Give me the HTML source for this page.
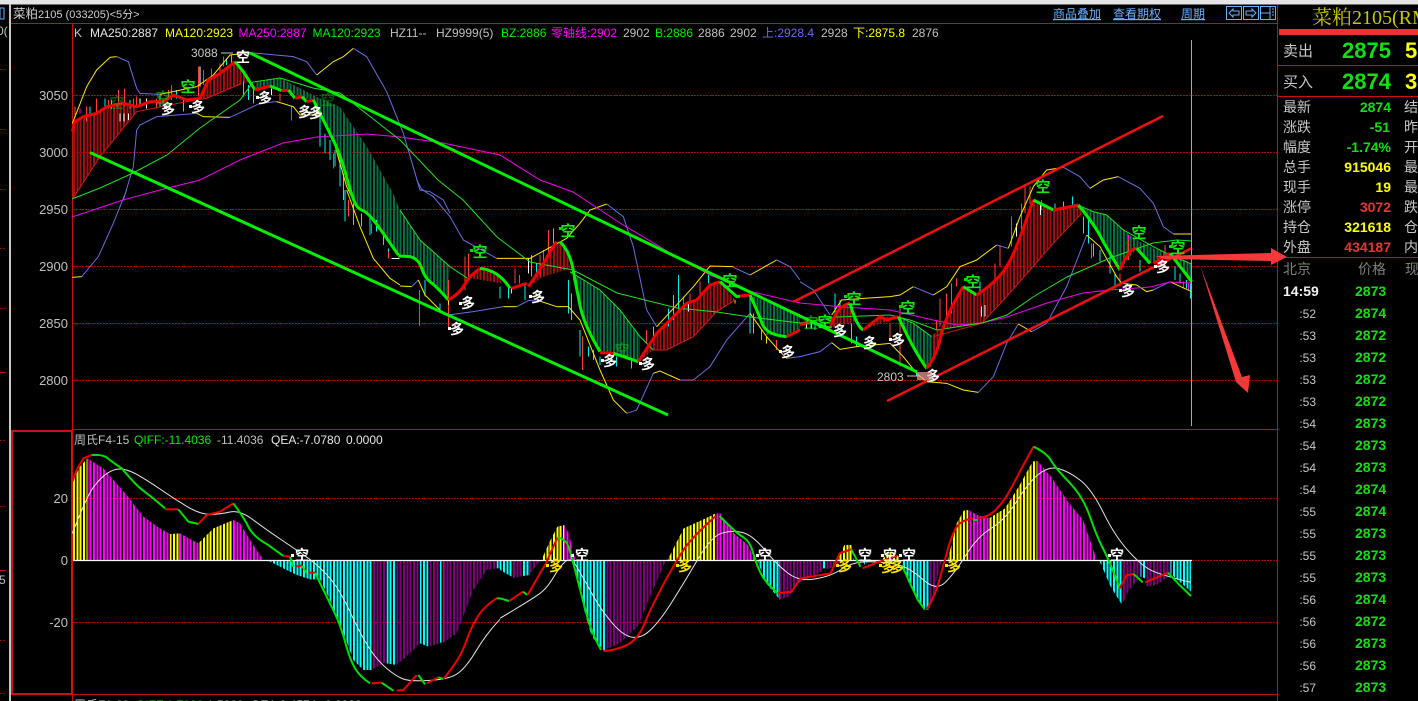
<!DOCTYPE html>
<html><head><meta charset="utf-8"><style>
html,body{margin:0;padding:0;background:#000;overflow:hidden;width:1418px;height:701px}
svg{display:block;position:absolute;left:0;top:0}
text{font-family:"Liberation Sans","Noto Sans CJK SC",sans-serif;font-size:12px;white-space:pre}
.s,.s *{vector-effect:non-scaling-stroke}
.t{fill:none;stroke-width:1}
.p{stroke:#6c6ce0}.y{stroke:#ffe800}.gn{stroke:#20e020}.m{stroke:#f000f0}.w{stroke:#e8e8e8}
.r3{fill:none;stroke:#f00000;stroke-width:3;stroke-linejoin:round}
.g3{fill:none;stroke:#00f000;stroke-width:3;stroke-linejoin:round}
.r2{fill:none;stroke:#f00000;stroke-width:2;stroke-linejoin:round}
.g2{fill:none;stroke:#00e000;stroke-width:2;stroke-linejoin:round}
.ax{font-size:13px;fill:#c0c0c0;text-anchor:end}
.lb{font-size:14px;fill:#c8c8c8}
.v{font-size:14px;font-weight:bold;text-anchor:end}
.tm{font-size:12px;fill:#c8c8c8;text-anchor:end}
.pr{font-size:14px;font-weight:bold;fill:#10e010}
.d{font-size:14px;fill:#fff;font-weight:bold;text-anchor:middle}
.dy{font-size:14px;fill:#ffe800;font-weight:bold;text-anchor:middle}
.k{font-size:15px;fill:#10e810;font-weight:bold;text-anchor:middle}
.kw{font-size:14px;fill:#fff;font-weight:bold;text-anchor:middle}
.lnk{font-size:12px;fill:#68b0ff;text-decoration:underline}
.bar{stroke-dasharray:2 1.3333;shape-rendering:crispEdges;fill:none}
</style></head><body>
<svg width="1418" height="701" viewBox="0 0 1418 701" xmlns="http://www.w3.org/2000/svg">
<defs>
<clipPath id="cdr">
<polygon transform="scale(.33333)" points="217,395 225,365 250,350 290,340 320,320 370,310 410,320 410,335 300,470 217,598"/>
<polygon transform="scale(.33333)" points="600,295 625,240 660,220 705,185 730,215 745,245 620,295"/>
<polygon transform="translate(400 180) scale(.33333)" points="210,285 240,265 295,285 305,310 215,295"/>
<polygon transform="translate(400 180) scale(.33333)" points="385,320 420,270 470,185 495,195 512,265 430,290"/>
<polygon transform="translate(400 180) scale(.33333)" points="715,545 770,460 820,410 860,370 890,360 930,315 960,305 1005,360 950,395 880,470 800,510 760,510"/>
<polygon transform="translate(800 160) scale(.33333)" points="90,505 110,450 150,430 165,485"/>
<polygon transform="translate(800 160) scale(.33333)" points="185,510 240,470 295,470 245,490"/>
<polygon transform="translate(800 160) scale(.33333)" points="380,625 410,580 440,460 490,380 530,405 590,365 640,290 700,120 760,150 835,135 845,160 760,250 690,330 620,410 545,490 410,510 395,530"/>
</clipPath>
<clipPath id="cdg">
<polygon points="255,82 280,78 317,97 340,107 367,147 393,193 400,210 420,240 450,267 448,300 437,287 425,278 418,258 400,256 380,228 367,212 357,208 350,190 340,153 325,123 313,100 300,97 288,90 270,86 255,90"/>
<polygon transform="translate(400 180) scale(.33333)" points="510,275 600,330 660,390 720,470 720,545 640,520 600,515 555,440 530,330"/>
<polygon transform="translate(400 180) scale(.33333)" points="1050,345 1200,405 1200,450 1160,470 1100,465 1075,400"/>
<polygon transform="translate(800 160) scale(.33333)" points="295,470 340,490 395,530 395,620 380,625 340,570"/>
<polygon transform="translate(800 160) scale(.33333)" points="835,135 880,155 920,165 970,210 1010,240 1060,265 1110,280 1175,310 1175,365 1110,280 1050,310 1010,265 960,330 920,265 880,190"/>
</clipPath>
<clipPath id="cy">
<polygon transform="translate(0 420) scale(.33333)" points="217,420 217,185 240,140 262,115 262,420"/>
<polygon transform="translate(0 420) scale(.33333)" points="510,342 540,340 540,420 510,420"/>
<polygon transform="translate(0 420) scale(.33333)" points="595,420 595,370 640,325 700,300 700,420"/>
<polygon transform="translate(500 420) scale(.4591 .33333)" points="90,420 110,360 125,320 140,315 140,420"/>
<polygon transform="translate(500 420) scale(.4591 .33333)" points="365,420 400,325 440,300 470,280 470,420"/>
<polygon transform="translate(500 420) scale(.4591 .33333)" points="735,420 750,375 765,375 770,420"/>
<polygon transform="translate(500 420) scale(.4591 .33333)" points="830,420 850,395 870,410 870,420"/>
<polygon transform="translate(500 420) scale(.4591 .33333)" points="975,420 995,310 1010,272 1020,270 1020,420"/>
<polygon transform="translate(500 420) scale(.4591 .33333)" points="1065,420 1065,295 1100,265 1130,200 1160,125 1170,122 1170,420"/>
</clipPath>
<clipPath id="cm">
<polygon transform="translate(0 420) scale(.33333)" points="262,420 262,115 310,145 345,185 380,225 430,290 480,325 510,342 510,420"/>
<polygon transform="translate(0 420) scale(.33333)" points="540,420 540,340 595,370 595,420"/>
<polygon transform="translate(0 420) scale(.33333)" points="700,420 700,300 720,310 750,360 790,420"/>
<polygon transform="translate(500 420) scale(.4591 .33333)" points="140,420 140,315 150,340 160,400 165,420"/>
<polygon transform="translate(500 420) scale(.4591 .33333)" points="470,420 470,280 480,280 510,340 540,375 555,420"/>
<polygon transform="translate(500 420) scale(.4591 .33333)" points="1020,420 1020,270 1040,285 1065,295 1065,420"/>
<polygon transform="translate(500 420) scale(.4591 .33333)" points="1170,420 1170,122 1200,170 1240,250 1270,300 1300,420"/>
</clipPath>
<clipPath id="cc">
<polygon transform="translate(0 420) scale(.33333)" points="800,420 850,445 890,465 930,478 960,478 985,530 1020,610 1060,720 1090,750 1115,750 1115,420"/>
<polygon transform="translate(0 420) scale(.33333)" points="1160,420 1160,730 1190,735 1190,420"/>
<polygon transform="translate(0 420) scale(.33333)" points="1260,420 1260,670 1285,680 1285,420"/>
<polygon transform="translate(0 420) scale(.33333)" points="1320,420 1320,668 1330,668 1330,420"/>
<polygon transform="translate(0 420) scale(.33333)" points="1490,420 1490,445 1500,445 1500,420"/>
<polygon transform="translate(500 420) scale(.4591 .33333)" points="0,420 0,450 25,470 25,420"/>
<polygon transform="translate(500 420) scale(.4591 .33333)" points="50,420 50,468 65,465 65,420"/>
<polygon transform="translate(500 420) scale(.4591 .33333)" points="160,420 185,580 200,650 225,690 230,690 230,420"/>
<polygon transform="translate(500 420) scale(.4591 .33333)" points="560,420 580,490 610,540 610,420"/>
<polygon transform="translate(500 420) scale(.4591 .33333)" points="703,420 703,445 710,445 710,420"/>
<polygon transform="translate(500 420) scale(.4591 .33333)" points="788,420 795,435 805,420"/>
<polygon transform="translate(500 420) scale(.4591 .33333)" points="875,420 890,490 925,570 935,570 935,420"/>
<polygon transform="translate(500 420) scale(.4591 .33333)" points="1305,420 1330,500 1355,555 1355,420"/>
<polygon transform="translate(500 420) scale(.4591 .33333)" points="1395,420 1395,470 1405,475 1405,420"/>
<polygon transform="translate(500 420) scale(.4591 .33333)" points="1460,420 1460,460 1505,515 1505,420"/>
</clipPath>
<clipPath id="cp">
<polygon transform="translate(0 420) scale(.33333)" points="1115,420 1115,750 1160,725 1160,420"/>
<polygon transform="translate(0 420) scale(.33333)" points="1190,420 1190,735 1230,700 1260,670 1260,420"/>
<polygon transform="translate(0 420) scale(.33333)" points="1285,420 1285,680 1320,670 1320,420"/>
<polygon transform="translate(0 420) scale(.33333)" points="1330,420 1330,668 1370,640 1420,510 1460,450 1490,445 1490,420"/>
<polygon transform="translate(500 420) scale(.4591 .33333)" points="25,420 25,475 50,468 50,420"/>
<polygon transform="translate(500 420) scale(.4591 .33333)" points="65,420 65,460 90,420"/>
<polygon transform="translate(500 420) scale(.4591 .33333)" points="230,420 230,688 260,670 300,620 330,520 360,425 360,420"/>
<polygon transform="translate(500 420) scale(.4591 .33333)" points="610,420 610,538 630,530 650,490 700,455 703,450 703,420"/>
<polygon transform="translate(500 420) scale(.4591 .33333)" points="710,420 710,448 730,440 745,422 745,420"/>
<polygon transform="translate(500 420) scale(.4591 .33333)" points="770,420 785,435 790,420"/>
<polygon transform="translate(500 420) scale(.4591 .33333)" points="935,420 935,570 945,520 960,430 965,420"/>
<polygon transform="translate(500 420) scale(.4591 .33333)" points="1355,420 1355,555 1370,510 1395,470 1395,420"/>
<polygon transform="translate(500 420) scale(.4591 .33333)" points="1405,420 1405,500 1430,495 1460,465 1460,420"/>
</clipPath>
</defs>
<rect width="1418" height="701" fill="#000"/>
<rect width="1418" height="4.5" fill="#e4e4e4"/>
<rect x="9" y="4" width="2" height="697" fill="#c8c8c8"/>
<rect x="0" y="8" width="4" height="11" fill="none" stroke="#68b0ff"/>
<text x="-3" y="35" fill="#c0c0c0">0(</text>
<path d="M0 69.5H6M0 129.5H6M0 189.5H6M0 248.5H6M0 308.5H6M0 440.5H6M0 506.5H6M0 640.5H6M0 693.5H6" stroke="#a00000" stroke-dasharray="2 1"/>
<path d="M0 372.5H6M0 570.5H6" stroke="#c01010"/>
<text x="-1" y="584" fill="#c0c0c0" font-size="10">5</text>

<!-- grid -->
<path d="M73 95.5H1278M73 152.5H1278M73 209.5H1278M73 266.5H1278M73 323.5H1278M73 380.5H1278M73 498.5H1278M73 622.5H1278M1192 560.5H1278" stroke="#b00000" stroke-dasharray="2 1"/>
<!-- frames -->
<path d="M11 23.5H1278M73 429.5H1278M73 694.5H1278" stroke="#c81010" stroke-width="1"/>
<path d="M72.5 23V701" stroke="#c81010"/>
<rect x="12" y="431" width="60" height="263" fill="none" stroke="#d01010" stroke-width="2"/>
<path d="M1277.5 5V701" stroke="#c81010"/>

<!-- clouds as bars -->
<line class="bar" x1="73" x2="1192" y1="225" y2="225" stroke="#a01010" stroke-width="360" clip-path="url(#cdr)"/>
<line class="bar" x1="73" x2="1192" y1="225" y2="225" stroke="#087048" stroke-width="360" clip-path="url(#cdg)"/>

<g class="s">
<!-- candles -->
<g fill="none" stroke-width="1" shape-rendering="crispEdges">
<g transform="scale(.33333)">
<path stroke="#ff4030" d="M225 320V350M260 320V365M290 295V345M325 300V325M355 270V320M373 265V320M400 295V325M410 290V320M470 295V325M505 270V300M515 255V300M595 200V290M610 210V255M635 205V240M660 190V225M670 170V200M875 320V362M840 280V305M1000 460V505"/>
<path stroke="#00f0f0" d="M270 320V345M315 295V320M335 300V325M390 300V325M480 285V320M550 295V335M530 270V295M680 175V195M695 165V190M730 245V290M745 255V300M760 270V310M960 340V440M975 400V460M990 420V480M1005 450V500M1020 470V560M1030 520V600"/>
<path stroke="#fff" d="M600 200V260M360 340V365M372 340V365M385 340V360M440 295V325M420 295V320M815 265V285"/>
<path stroke="#f0f" d="M240 325V340M950 325V350"/>
</g>
<g transform="translate(0 190) scale(.33333)">
<path stroke="#00f0f0" d="M1035 0V95M1060 40V105M1085 70V110M1110 80V135M1130 90V125M1150 130V165M1165 175V205"/>
<path stroke="#ff4030" d="M1045 30V80M1115 100V130M1165 185V205"/>
<path stroke="#fff" d="M1175 205H1198"/>
</g>
<g transform="translate(400 180) scale(.33333)">
<path stroke="#ff4030" d="M58 330V438M145 300V450M195 230V330M205 220V290M345 265V310M358 285V310M430 210V260M445 150V220M548 470V570M740 450V490M900 305V350M870 340V370M850 350V390M1130 480V510M420 225V290"/>
<path stroke="#00f0f0" d="M75 300V350M120 370V395M300 320V355M325 320V355M375 315V360M395 225V290M410 250V290M460 145V190M505 300V400M515 340V420M540 450V530M565 500V530M580 510V540M600 530V555M650 530V560M695 540V565M820 345V420M835 285V390M925 285V310M805 385V440M1050 350V460M1060 400V460M1085 450V480M1100 470V490M760 440V480"/>
<path stroke="#ffe800" d="M145 360V375M335 325V340M1100 470V490M1005 360V370"/>
<path stroke="#fff" d="M385 235V280M865 370V395"/>
</g>
<g transform="translate(800 160) scale(.33333)">
<path stroke="#ff4030" d="M300 440V620M270 490V540M420 415V500M440 400V470M455 370V460M470 355V380M585 310V370M600 255V320M635 170V260M665 130V210M675 80V160M690 80V130M725 120V150M960 340V380M985 240V300M875 250V295M1095 255V290M410 480V510"/>
<path stroke="#00f0f0" d="M105 400V470M120 420V450M155 490V550M170 530V560M350 630V650M540 365V400M765 130V155M790 125V150M818 110V135M850 170V220M865 175V250M880 250V290M900 270V305M930 290V340M945 340V385M1020 300V335M1125 320V360M1140 340V370M1160 360V385M1172 370V415M45 490V510"/>
<path stroke="#fff" d="M722 130V165M650 190V230M545 440V470M555 435V470M20 490V505M35 490V505"/>
<path stroke="#f0f" d="M1150 365V385M1165 370V390M985 225V240"/>
</g>
</g>

<!-- thin curves -->
<g transform="scale(.33333)">
<polyline class="t y" points="217,370 225,350 260,260 290,210 330,172 350,170"/>
<polyline class="t p" points="350,170 385,185 410,265 420,280 480,283"/>
<polyline class="t y" points="480,283 590,260 640,225 690,165 750,158"/>
<polyline class="t p" points="750,158 880,170 920,185 950,225"/>
<polyline class="t y" points="950,225 1000,185 1030,170 1060,145"/>
<polyline class="t p" points="1060,145 1100,170 1160,275 1210,400 1260,570 1290,575 1330,600 1350,640"/>
<polyline class="t p" points="370,600 400,500 410,390 420,375 470,350 590,340"/>
<polyline class="t y" points="590,340 610,350 690,352"/>
<polyline class="t p" points="690,352 780,310 830,305"/>
<polyline class="t y" points="830,305 880,320 900,345 960,345 1000,420 1040,560 1060,600"/>
<polyline class="t" style="stroke:#d01818" points="217,598 300,470 410,335 560,305 620,295 725,250"/>
</g>
<g transform="translate(0 190) scale(.33333)">
<polyline class="t y" points="217,262 245,260"/>
<polyline class="t p" points="245,260 295,200 340,100 380,0"/>
<polyline class="t y" points="1040,0 1080,110 1120,205 1170,265 1200,285"/>
</g>
<g transform="translate(400 180) scale(.33333)">
<polyline class="t p" points="50,0 65,28 100,50 150,110 190,180 290,235"/>
<polyline class="t y" points="290,235 390,235 500,175 540,130 570,90 620,72"/>
<polyline class="t p" points="620,72 670,110 700,200 740,390 770,440"/>
<polyline class="t y" points="770,440 880,320 930,258 1000,260"/>
<polyline class="t p" points="1000,262 1050,285"/>
<polyline class="t y" points="1050,285 1130,240"/>
<polyline class="t p" points="1130,240 1170,260 1200,300"/>
<polyline class="t y" points="0,318 35,320"/>
<polyline class="t p" points="35,320 55,300"/>
<polyline class="t y" points="55,300 75,345 120,390 145,405"/>
<polyline class="t p" points="145,405 220,395 310,380"/>
<polyline class="t y" points="310,380 350,380"/>
<polyline class="t p" points="350,380 385,362 410,360"/>
<polyline class="t y" points="410,360 470,380 505,380 540,420 600,570 640,660 680,700"/>
<polyline class="t p" points="680,700 710,690 760,580"/>
<polyline class="t y" points="760,580 780,573 840,600"/>
<polyline class="t p" points="840,600 880,600 930,560 980,480 1050,400"/>
<polyline class="t y" points="1050,400 1100,470 1140,515 1160,535"/>
<polyline class="t p" points="1160,535 1200,530"/>
<polyline class="t gn" points="0,90 60,180 150,260 210,300"/>
<polyline class="t gn" points="510,275 600,330 660,390 720,470 760,510"/>
<polyline style="stroke:#d01818" class="t" points="760,510 800,510 880,470 950,395 1005,360"/>
</g>
<g transform="translate(800 160) scale(.33333)">
<polyline class="t p" points="0,365 40,390 90,465"/>
<polyline class="t y" points="95,465 125,420 190,415 270,410 300,405 340,380"/>
<polyline class="t p" points="340,380 400,405"/>
<polyline class="t y" points="400,405 440,380 480,320 530,300 590,255"/>
<polyline class="t p" points="590,255 625,265"/>
<polyline class="t y" points="625,265 660,170 700,80 740,30 790,22"/>
<polyline class="t p" points="790,22 840,50 870,85"/>
<polyline class="t y" points="870,85 910,60 955,50"/>
<polyline class="t p" points="955,50 1020,85 1060,130 1090,200 1120,222"/>
<polyline class="t y" points="1120,222 1175,222"/>
<polyline class="t p" points="0,590 60,575 95,548"/>
<polyline class="t y" points="95,548 120,568 170,560 270,550 310,590 350,640 380,665 440,670 490,690 535,697"/>
<polyline class="t p" points="535,697 580,650 620,550 655,492"/>
<polyline class="t y" points="655,492 695,515"/>
<polyline class="t p" points="695,515 740,490 800,380 860,225"/>
<polyline class="t y" points="860,225 900,260 950,350 965,370 1010,375 1040,395 1060,390"/>
<polyline class="t p" points="1060,390 1110,365"/>
<polyline class="t y" points="1110,365 1175,395"/>
<polyline class="t gn" points="845,140 880,155 920,165 970,210 1060,260 1120,290 1175,312"/>
<polyline class="t gn" points="295,470 340,490 395,530"/>
<polyline style="stroke:#d01818" class="t" points="400,530 545,490 620,410 690,330 760,250 845,160"/>
</g>
<polyline class="t m" points="72,217 123,200 160,190 200,180 240,160 283,143 317,137 367,134 400,137 443,143 500,155 540,180 573,192 620,223 677,257 710,275 753,292 800,303 843,307 890,310 933,320 957,325 982,323 1007,317 1047,303 1083,293 1110,290 1150,287 1170,282 1192,283"/>
<polyline class="t gn" points="72,199 100,188 133,173 167,155 200,128 240,100 253,82 280,78 313,88 340,93 400,140 438,180 463,200 497,237 530,262 573,270 617,293 677,308 717,312 750,317 800,323 837,317 890,315 910,320 937,330 982,323 1007,315 1033,297 1067,277 1110,258 1133,250 1153,243 1177,240 1192,241"/>

<!-- channel lines -->
<line x1="250" y1="53" x2="917" y2="372" stroke="#00f000" stroke-width="3"/>
<line x1="90" y1="152.5" x2="668" y2="415" stroke="#00f000" stroke-width="3"/>
<line x1="793" y1="302" x2="1163" y2="116" stroke="#f01010" stroke-width="2.5"/>
<line x1="887" y1="401" x2="1192" y2="248" stroke="#f01010" stroke-width="2.5"/>

<!-- thick trend line -->
<g transform="scale(.33333)">
<polyline class="r3" points="217,395 225,365 250,350 290,340 320,320 370,310 410,320 450,305 490,305 520,285 560,300 600,295 625,240 660,220 705,185"/>
<polyline class="g3" points="705,185 730,215 765,270"/>
<polyline class="r3" points="765,270 810,258"/>
<polyline class="g3" points="810,258 845,272"/>
<polyline class="r3" points="845,272 865,270"/>
<polyline class="g3" points="865,270 885,295"/>
<polyline class="r3" points="885,295 905,290"/>
<polyline class="g3" points="905,290 920,305"/>
<polyline class="r3" points="920,305 940,300"/>
<path class="g3" d="M940 300Q975 370 997 415Q1020 460 1035 515Q1050 570 1060 597Q1070 625 1085 630Q1100 635 1120 660Q1140 685 1195 765"/>
</g>
<g transform="translate(400 180) scale(.33333)">
<path class="g3" d="M-5 228L30 230Q55 235 65 265Q75 295 92 307Q110 320 145 360"/>
<path class="r3" d="M145 360Q180 340 195 312Q210 285 240 265"/>
<path class="g3" d="M240 265Q295 270 330 325"/>
<polyline class="r3" points="335,325 380,310"/>
<path class="r3" d="M385 320Q420 270 445 225Q458 200 470 185"/>
<path class="g3" d="M480 185Q510 215 520 272Q530 330 542 385Q555 440 600 515"/>
<polyline class="r3" points="600,518 640,520"/>
<polyline class="g3" points="640,520 715,545"/>
<polyline class="r3" points="715,545 770,460 820,410 860,370 890,360 930,315 960,305"/>
<polyline class="g3" points="960,305 1010,350 1020,348"/>
<polyline class="r3" points="1020,348 1050,345"/>
<path class="g3" d="M1050 345Q1075 400 1087 432Q1100 465 1160 470"/>
<polyline class="r3" points="1160,470 1200,450"/>
</g>
<g transform="translate(800 160) scale(.33333)">
<polyline class="r3" points="0,495 30,485"/>
<polyline class="g3" points="30,485 90,505"/>
<path class="r3" d="M90 505Q110 435 150 430"/>
<path class="g3" d="M150 430Q170 500 190 510"/>
<polyline class="r3" points="190,510 240,470 260,480 295,470"/>
<path class="g3" d="M295 470Q340 570 380 625"/>
<path class="r3" d="M380 625Q410 590 425 520Q440 460 490 380"/>
<polyline class="g3" points="490,380 530,405"/>
<path class="r3" d="M530 405Q590 365 615 327Q640 290 670 205Q685 160 700 120"/>
<polyline class="g3" points="700,120 760,150"/>
<polyline class="r3" points="760,150 835,135"/>
<path class="g3" d="M835 135Q880 190 900 227Q920 265 960 330"/>
<path class="r3" d="M960 330Q985 265 1010 265"/>
<polyline class="g3" points="1010,265 1050,310"/>
<polyline class="r3" points="1060,310 1110,280"/>
<polyline class="g3" points="1110,280 1175,365"/>
</g>
</g>

<!-- lower panel bars -->
<line class="bar" x1="73" x2="1192" y1="562" y2="562" stroke="#ffff00" stroke-width="264" clip-path="url(#cy)"/>
<line class="bar" x1="73" x2="1192" y1="562" y2="562" stroke="#ff00ff" stroke-width="264" clip-path="url(#cm)"/>
<line class="bar" x1="73" x2="1192" y1="562" y2="562" stroke="#00ffff" stroke-width="264" clip-path="url(#cc)"/>
<line class="bar" x1="73" x2="1192" y1="562" y2="562" stroke="#800080" stroke-width="264" clip-path="url(#cp)"/>
<line x1="73" y1="560.5" x2="1192" y2="560.5" stroke="#fff" stroke-width="1.2"/>

<g class="s">
<!-- lower panel lines -->
<g transform="translate(0 420) scale(.33333)">
<path class="t w" d="M217 340Q260 230 280 202Q300 175 320 161Q340 147 360 147Q380 147 410 163Q440 180 480 207Q520 235 560 259Q600 283 630 283Q660 283 690 276Q720 270 760 300Q800 330 845 360Q890 390 925 415Q960 440 990 475Q1020 510 1050 575Q1080 640 1105 680Q1130 720 1160 745Q1190 770 1210 777Q1230 785 1290 781Q1350 778 1375 759Q1400 740 1430 690Q1460 640 1500 598"/>
<polyline class="r2" points="217,185 230,150 250,115 275,105"/>
<path class="g2" d="M275 105Q310 103 322 114Q335 125 365 145Q395 180 407 192Q420 205 440 220Q460 235 495 265"/>
<polyline class="r2" points="495,268 535,268"/>
<polyline class="g2" points="535,268 565,305 595,312"/>
<polyline class="r2" points="595,312 620,285 660,275 700,250"/>
<path class="g2" d="M700 250Q730 290 745 320Q760 350 800 372L850 408"/>
<polyline class="r2" points="850,408 870,410"/>
<polyline class="g2" points="870,410 880,440"/>
<polyline class="r2" points="885,440 905,437"/>
<polyline class="g2" points="905,437 920,458"/>
<polyline class="r2" points="925,458 945,458"/>
<path class="g2" d="M945 458Q985 540 1002 575Q1020 610 1035 665Q1050 720 1065 745Q1080 770 1110 790"/>
<polyline class="r2" points="1115,790 1145,788"/>
<polyline class="g2" points="1145,788 1180,812"/>
<polyline class="r2" points="1190,812 1210,810 1250,765"/>
<polyline class="g2" points="1255,765 1275,793"/>
<polyline class="r2" points="1280,790 1315,772"/>
<polyline class="g2" points="1315,772 1330,777"/>
<path class="r2" d="M1330 777Q1360 740 1375 715Q1390 690 1400 660Q1410 630 1430 595Q1450 560 1490 535"/>
<polyline class="g2" points="1490,535 1500,535"/>
</g>
<g transform="translate(500 420) scale(.4591 .33333)">
<path class="t w" d="M0 595L30 570Q60 545 80 527Q100 510 115 475Q130 440 142 425Q155 410 167 440Q180 470 200 520Q220 570 245 610Q270 650 290 652Q310 655 330 627Q350 600 375 545Q400 490 430 420Q460 350 482 340Q505 330 527 337Q550 345 575 387Q600 430 625 457Q650 485 685 477Q720 470 745 447Q770 425 800 425Q830 425 860 432Q890 440 920 477Q950 515 970 487Q990 460 1015 405Q1040 350 1070 325Q1100 300 1125 245Q1150 190 1172 164Q1195 138 1217 146Q1240 155 1265 182Q1290 210 1315 280Q1340 350 1370 395Q1400 440 1420 452Q1440 465 1505 487"/>
<polyline class="g2" points="0,535 20,543"/>
<polyline class="r2" points="20,543 50,515"/>
<polyline class="g2" points="50,515 60,525"/>
<polyline class="r2" points="60,525 100,430 125,353"/>
<path class="g2" d="M125 353Q145 355 152 392Q160 430 170 485Q180 540 190 590Q200 640 220 690"/>
<path class="r2" d="M225 693Q250 692 275 676Q300 660 315 610Q330 560 357 490Q385 420 402 385Q420 350 470 288"/>
<path class="g2" d="M478 288Q515 340 530 352Q545 365 552 402Q560 440 570 465Q580 490 605 520"/>
<polyline class="r2" points="605,520 635,515 655,475 720,460 740,400 765,388"/>
<polyline class="g2" points="765,388 785,440"/>
<polyline class="r2" points="790,445 820,428 865,408"/>
<polyline class="g2" points="875,435 910,540 925,568"/>
<path class="r2" d="M930 568Q950 520 957 480Q965 440 975 390Q985 340 995 320Q1005 300 1030 295"/>
<polyline class="g2" points="1030,300 1040,300"/>
<path class="r2" d="M1040 295Q1065 292 1082 266Q1100 240 1115 200Q1130 160 1162 80"/>
<path class="g2" d="M1162 80Q1190 98 1200 121Q1210 145 1240 187Q1270 230 1285 290Q1300 350 1315 390Q1330 430 1350 505"/>
<polyline class="r2" points="1350,505 1365,465 1380,462"/>
<polyline class="g2" points="1380,462 1400,487"/>
<polyline class="r2" points="1405,487 1455,458"/>
<polyline class="g2" points="1455,458 1480,495 1505,528"/>
</g>
</g>

<!-- vertical cursor -->
<line x1="1191.5" y1="40" x2="1191.5" y2="426" stroke="#e080e0"/>

<!-- signals -->
<g fill="#fff">
<text class="d" x="168" y="114">多</text><text class="d" x="198" y="112">多</text><text class="d" x="265" y="103">多</text><text class="d" x="305" y="117">多</text><text class="d" x="316" y="118">多</text>
<text class="d" x="468" y="308">多</text><text class="d" x="457" y="334">多</text><text class="d" x="538" y="302">多</text><text class="d" x="610" y="366">多</text><text class="d" x="648" y="369">多</text><text class="d" x="788" y="357">多</text>
<text class="d" x="840" y="336">多</text><text class="d" x="870" y="348">多</text><text class="d" x="898" y="345">多</text><text class="d" x="933" y="381">多</text><text class="d" x="1128" y="296">多</text><text class="d" x="1163" y="272">多</text>
<rect x="164" y="106" width="3" height="3"/><rect x="189" y="105" width="3" height="3"/><rect x="256" y="96" width="3" height="3"/><rect x="459" y="302" width="3" height="3"/><rect x="448" y="327" width="3" height="3"/><rect x="529" y="295" width="3" height="3"/><rect x="601" y="359" width="3" height="3"/><rect x="639" y="362" width="3" height="3"/><rect x="779" y="350" width="3" height="3"/><rect x="889" y="338" width="3" height="3"/><rect x="1119" y="289" width="3" height="3"/><rect x="1154" y="265" width="3" height="3"/>
</g>
<text class="kw" x="243" y="62">空</text>
<text class="k" x="188" y="92">空</text><text class="k" x="163" y="103" opacity=".5">空</text><text class="k" x="117" y="108" opacity=".35">空</text>
<text class="k" x="328" y="105" opacity=".35">空</text>
<text class="k" x="480" y="257">空</text><text class="k" x="568" y="236">空</text><text class="k" x="730" y="286">空</text><text class="k" x="622" y="355" opacity=".4">空</text>
<text class="k" x="854" y="304">空</text><text class="k" x="908" y="313">空</text><text class="k" x="973" y="287">空</text><text class="k" x="1043" y="192">空</text><text class="k" x="1139" y="238">空</text><text class="k" x="1178" y="253">空</text><text class="k" x="825" y="327">空</text><text class="k" x="811" y="328" opacity=".6">空</text>
<g fill="#00e000"><rect x="470" y="249" width="3" height="3"/><rect x="559" y="227" width="3" height="3"/><rect x="844" y="295" width="3" height="3"/><rect x="899" y="305" width="3" height="3"/><rect x="964" y="278" width="3" height="3"/><rect x="1169" y="245" width="3" height="3"/></g>
<text x="191" y="57" fill="#c8c8c8">3088</text><path d="M221 53H233" stroke="#c8c8c8"/>
<text x="877" y="381" fill="#c8c8c8">2803</text><path d="M907 376H920" stroke="#c8c8c8"/>
<rect x="917" y="372" width="15" height="8" fill="#f0a0a0" opacity=".7"/>

<text class="kw" x="302" y="560">空</text><text class="kw" x="582" y="560">空</text><text class="kw" x="765" y="560">空</text><text class="kw" x="865" y="560">空</text><text class="kw" x="890" y="560">空</text><text class="kw" x="909" y="560">空</text><text class="kw" x="1117" y="560">空</text>
<text class="dy" x="556" y="571">多</text><text class="dy" x="685" y="571">多</text><text class="dy" x="845" y="571">多</text><text class="dy" x="888" y="572">多</text><text class="dy" x="897" y="572">多</text><text class="dy" x="954" y="571">多</text>
<g fill="#fff"><rect x="291" y="554" width="3" height="3"/><rect x="571" y="554" width="3" height="3"/><rect x="756" y="554" width="3" height="3"/><rect x="881" y="554" width="3" height="3"/><rect x="899" y="554" width="3" height="3"/><rect x="1108" y="554" width="3" height="3"/></g>
<g fill="#ffe800"><rect x="546" y="564" width="3" height="3"/><rect x="676" y="564" width="3" height="3"/><rect x="836" y="564" width="3" height="3"/><rect x="879" y="564" width="3" height="3"/><rect x="945" y="564" width="3" height="3"/></g>

<!-- axis -->
<text class="ax" x="68" y="100">3050</text><text class="ax" x="68" y="157">3000</text><text class="ax" x="68" y="214">2950</text><text class="ax" x="68" y="271">2900</text><text class="ax" x="68" y="328">2850</text><text class="ax" x="68" y="385">2800</text>
<text class="ax" x="68" y="503">20</text><text class="ax" x="68" y="565">0</text><text class="ax" x="68" y="627">-20</text>

<!-- header -->
<text x="13" y="18" fill="#d0d0d0" style="font-size:11px"><tspan style="font-size:12.5px">菜粕</tspan>2105 (033205)&lt;5分&gt;</text>
<text class="lnk" x="1053" y="18">商品叠加</text><text class="lnk" x="1113" y="18">查看期权</text><text class="lnk" x="1181" y="18">周期</text>
<g fill="none" stroke="#68b0ff">
<rect x="1226.5" y="6.5" width="15" height="13"/><rect x="1243.5" y="6.5" width="15" height="13"/><rect x="1260.5" y="6.5" width="15" height="13"/>
<path d="M1229 13L1233 9V11H1239V15H1233V17Z M1256 13L1252 9V11H1246V15H1252V17Z M1261 13H1270M1270 7V19M1272 9H1274M1272 12H1274M1272 15H1274"/>
</g>

<!-- legend -->
<text y="37">
<tspan x="74" fill="#c8c8c8">K</tspan><tspan x="90" fill="#e8e8e8">MA250:2887</tspan><tspan x="165" fill="#ffff00">MA120:2923</tspan><tspan x="238.5" fill="#ff00ff">MA250:2887</tspan><tspan x="312.5" fill="#00f000">MA120:2923</tspan><tspan x="390" fill="#c0c0c0">HZ11--</tspan><tspan x="436" fill="#c0c0c0">HZ9999(5)</tspan><tspan x="501" fill="#00f000">BZ:2886</tspan><tspan x="551" fill="#ff00ff">零轴线:2902</tspan><tspan x="623" fill="#c0c0c0">2902</tspan><tspan x="655" fill="#00f000">B:2886</tspan><tspan x="698" fill="#c0c0c0">2886</tspan><tspan x="730" fill="#c0c0c0">2902</tspan><tspan x="762" fill="#6c6cf0">上:2928.4</tspan><tspan x="821" fill="#c0c0c0">2928</tspan><tspan x="853" fill="#ffff00">下:2875.8</tspan><tspan x="912" fill="#c0c0c0">2876</tspan>
</text>
<text y="444">
<tspan x="74" fill="#c0c0c0">周氏F4-15</tspan><tspan x="134" fill="#00f000">QIFF:-11.4036</tspan><tspan x="217" fill="#c0c0c0">-11.4036</tspan><tspan x="271" fill="#e8e8e8">QEA:-7.0780</tspan><tspan x="346" fill="#e8e8e8">0.0000</tspan>
</text>
<text y="709">
<tspan x="74" fill="#c0c0c0">周氏F1-30</tspan><tspan x="136" fill="#00f000">QIFF:1.7380</tspan><tspan x="207" fill="#c0c0c0">1.7380</tspan><tspan x="251" fill="#e8e8e8">QEA:0.4574</tspan><tspan x="325" fill="#e8e8e8">0.0000</tspan>
</text>

<!-- right panel -->
<text x="1312" y="24" fill="#c8c800" style="font-family:'Liberation Serif','Noto Serif CJK SC',serif;font-size:20px">菜粕2105(RM</text>
<rect x="1279" y="29" width="139" height="6" fill="#f03030"/>
<path d="M1278 65.5H1418M1278 96.5H1418M1278 257.5H1418" stroke="#c81010"/>
<text class="lb" style="font-size:15px" x="1283" y="56">卖出</text><text class="lb" style="font-size:15px" x="1283" y="87">买入</text>
<text x="1391" y="58" style="font-size:22px;font-weight:bold;text-anchor:end;fill:#10e010">2875</text>
<text x="1391" y="89" style="font-size:22px;font-weight:bold;text-anchor:end;fill:#10e010">2874</text>
<text x="1405" y="58" style="font-size:22px;font-weight:bold;fill:#ffff00">5</text>
<text x="1405" y="89" style="font-size:22px;font-weight:bold;fill:#ffff00">3</text>

<text class="lb" x="1283" y="112">最新</text><text class="v" x="1391" y="112" fill="#10e010">2874</text><text class="lb" x="1404" y="112">结</text>
<text class="lb" x="1283" y="132">涨跌</text><text class="v" x="1390" y="132" fill="#10e010">-51</text><text class="lb" x="1404" y="132">昨</text>
<text class="lb" x="1283" y="152">幅度</text><text class="v" x="1391" y="152" fill="#10e010">-1.74%</text><text class="lb" x="1404" y="152">开</text>
<text class="lb" x="1283" y="172">总手</text><text class="v" x="1391" y="172" fill="#ffff00">915046</text><text class="lb" x="1404" y="172">最</text>
<text class="lb" x="1283" y="192">现手</text><text class="v" x="1391" y="192" fill="#ffff00">19</text><text class="lb" x="1404" y="192">最</text>
<text class="lb" x="1283" y="212">涨停</text><text class="v" x="1391" y="212" fill="#f03030">3072</text><text class="lb" x="1404" y="212">跌</text>
<text class="lb" x="1283" y="232">持仓</text><text class="v" x="1391" y="232" fill="#ffff00">321618</text><text class="lb" x="1404" y="232">仓</text>
<text class="lb" x="1283" y="252">外盘</text><text class="v" x="1391" y="252" fill="#f03030">434187</text><text class="lb" x="1404" y="252">内</text>

<text class="lb" style="fill:#808080" x="1283" y="274">北京</text><text class="lb" style="fill:#808080" x="1358" y="274">价格</text><text class="lb" style="fill:#808080" x="1405" y="274">现</text>
<text x="1283" y="296" style="font-size:14px;font-weight:bold;fill:#f0f0f0">14:59</text>
<text class="pr" x="1355" y="296">2873</text>
<text class="tm" x="1316" y="318">:52</text><text class="pr" x="1355" y="318">2874</text>
<text class="tm" x="1316" y="340">:53</text><text class="pr" x="1355" y="340">2872</text>
<text class="tm" x="1316" y="362">:53</text><text class="pr" x="1355" y="362">2872</text>
<text class="tm" x="1316" y="384">:53</text><text class="pr" x="1355" y="384">2872</text>
<text class="tm" x="1316" y="406">:53</text><text class="pr" x="1355" y="406">2872</text>
<text class="tm" x="1316" y="428">:54</text><text class="pr" x="1355" y="428">2873</text>
<text class="tm" x="1316" y="450">:54</text><text class="pr" x="1355" y="450">2873</text>
<text class="tm" x="1316" y="472">:54</text><text class="pr" x="1355" y="472">2873</text>
<text class="tm" x="1316" y="494">:54</text><text class="pr" x="1355" y="494">2874</text>
<text class="tm" x="1316" y="516">:55</text><text class="pr" x="1355" y="516">2874</text>
<text class="tm" x="1316" y="538">:55</text><text class="pr" x="1355" y="538">2873</text>
<text class="tm" x="1316" y="560">:55</text><text class="pr" x="1355" y="560">2873</text>
<text class="tm" x="1316" y="582">:55</text><text class="pr" x="1355" y="582">2873</text>
<text class="tm" x="1316" y="604">:56</text><text class="pr" x="1355" y="604">2874</text>
<text class="tm" x="1316" y="626">:56</text><text class="pr" x="1355" y="626">2872</text>
<text class="tm" x="1316" y="648">:56</text><text class="pr" x="1355" y="648">2873</text>
<text class="tm" x="1316" y="670">:56</text><text class="pr" x="1355" y="670">2873</text>
<text class="tm" x="1316" y="692">:57</text><text class="pr" x="1355" y="692">2873</text>

<!-- annotation arrows -->
<polygon fill="#f53838" points="1155,256 1271,253 1271,248 1287,257 1271,265 1271,261 1165,259"/>
<polygon fill="#f53838" points="1200.5,266.5 1242,377 1250,375 1248,393 1236,382"/>
</svg>
</body></html>
